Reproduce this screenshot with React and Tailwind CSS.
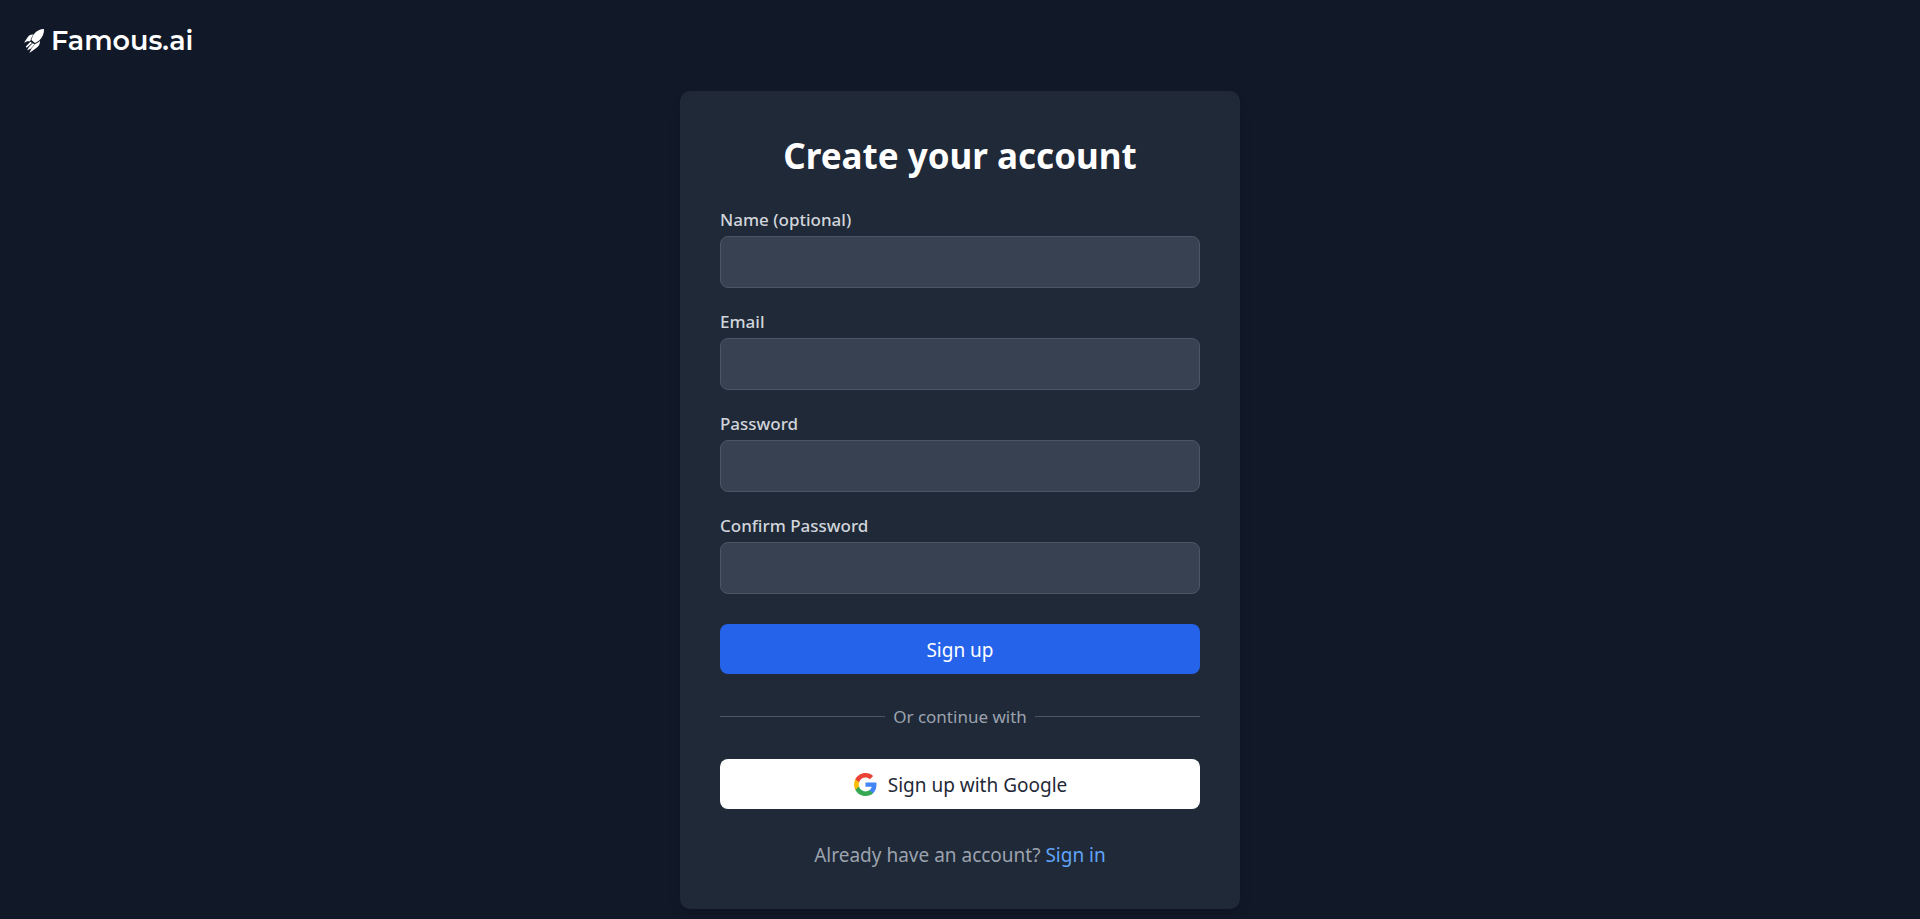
const fields = [
  { id: 'name', label: 'Name (optional)', type: 'text' },
  { id: 'email', label: 'Email', type: 'email' },
  { id: 'password', label: 'Password', type: 'password' },
  { id: 'confirm-password', label: 'Confirm Password', type: 'password' },
];

function RocketIcon() {
  return (
    <svg viewBox="0 0 60 72" className="h-6 w-5 fill-white" aria-hidden="true">
      <path d="M60 0C48 0 39 5 32 13C27 19 24 26 22 33L33 42C41 39 49 33 54 24C59 16 60 9 60 0Z" />
      <path d="M28 17C20 16 14 20 11 25L0 41L10 37L18 37L20 33C21 28 24 22 28 17Z" />
      <path d="M48 35C43 40 38 43 33 45L28 52L23 58L16 72L37 57C45 51 48 45 48 35Z" />
      <path d="M19 38L24 42L8 56L5 53Z" />
      <path d="M26 43L32 46L20 59L9 64L15 54Z" />
    </svg>
  );
}

function GoogleIcon() {
  return (
    <svg viewBox="0 0 24 24" className="size-[25px]" aria-hidden="true">
      <path fill="#4285F4" d="M22.56 12.25c0-.78-.07-1.53-.2-2.25H12v4.26h5.92c-.26 1.37-1.04 2.53-2.21 3.31v2.77h3.57c2.08-1.92 3.28-4.74 3.28-8.09z" />
      <path fill="#34A853" d="M12 23c2.97 0 5.46-.98 7.28-2.66l-3.57-2.77c-.98.66-2.23 1.06-3.71 1.06-2.86 0-5.29-1.93-6.16-4.53H2.18v2.84C3.99 20.53 7.7 23 12 23z" />
      <path fill="#FBBC05" d="M5.84 14.09c-.22-.66-.35-1.36-.35-2.09s.13-1.43.35-2.09V7.07H2.18C1.43 8.55 1 10.22 1 12s.43 3.45 1.18 4.93l2.85-2.22.81-.62z" />
      <path fill="#EA4335" d="M12 5.38c1.62 0 3.06.56 4.21 1.64l3.15-3.15C17.45 2.09 14.97 1 12 1 7.7 1 3.99 3.47 2.18 7.07l3.66 2.84c.87-2.6 3.3-4.53 6.16-4.53z" />
    </svg>
  );
}

export default function App() {
  return (
    <div className="flex min-h-screen flex-col bg-[#111827] font-['Segoe_UI','Noto_Sans',sans-serif]">
      <header className="px-6 pt-5">
        <a href="/" className="inline-flex items-center gap-[7px] text-white">
          <RocketIcon />
          <span className="font-['Montserrat','Inter',sans-serif] text-[27px] leading-[41px] font-semibold">Famous.ai</span>
        </a>
      </header>

      <main className="flex flex-1 justify-center pt-[30px] pb-[10px]">
        <section className="w-full max-w-[560px] rounded-[10px] bg-[#1f2937] px-10 pt-10 pb-[38px] shadow-lg">
          <h1 className="mb-[26px] text-center text-[35px] leading-[49px] font-bold text-white">Create your account</h1>

          <form onSubmit={(e) => e.preventDefault()}>
            <div className="flex flex-col gap-5">
              {fields.map((f) => (
                <div key={f.id}>
                  <label htmlFor={f.id} className="mb-[3px] block text-[17px] leading-[27px] font-medium text-[#d1d5db]">
                    {f.label}
                  </label>
                  <input
                    id={f.id}
                    type={f.type}
                    className="block h-[52px] w-full rounded-lg border border-[#4b5563] bg-[#374151] px-4 text-[19px] text-white outline-none"
                  />
                </div>
              ))}
            </div>
            <button type="submit" className="mt-[30px] h-[50px] w-full rounded-lg bg-[#2563eb] pt-[2px] text-[19px] leading-[30px] text-white">
              Sign up
            </button>
          </form>

          <div className="my-[30px] flex items-center gap-2">
            <span className="h-px flex-1 bg-[#4b5563]" />
            <span className="text-[17px] leading-[25px] text-[#9ca3af]">Or continue with</span>
            <span className="h-px flex-1 bg-[#4b5563]" />
          </div>

          <button type="button" className="flex h-[50px] w-full items-center justify-center gap-[10px] rounded-lg bg-white text-[19px] leading-[30px] text-[#1f2937]">
            <GoogleIcon />
            <span className="pt-[2px]">Sign up with Google</span>
          </button>

          <p className="mt-[30px] text-center text-[19px] leading-[32px] text-[#9ca3af]">
            Already have an account?{' '}
            <a href="/signin" className="text-[#60a5fa]">Sign in</a>
          </p>
        </section>
      </main>
    </div>
  );
}
